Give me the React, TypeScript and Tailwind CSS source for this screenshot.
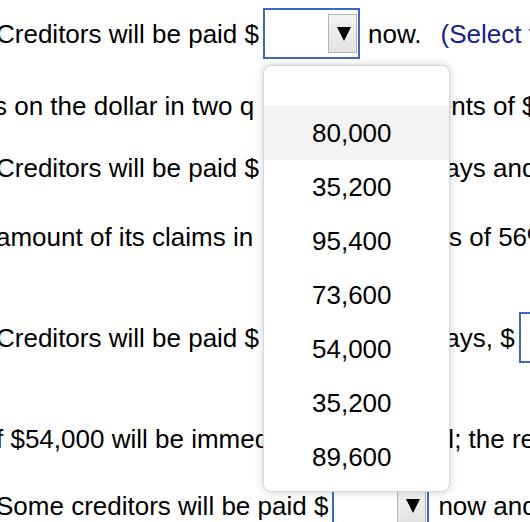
import React from 'react';

const font = { fontFamily: '"Liberation Sans", Arial, Helvetica, sans-serif' };

const SelectBox: React.FC<{ className?: string }> = ({ className }) => (
  <div
    className={`flex h-[51px] w-[97px] shrink-0 items-center justify-end border-2 border-[#3d66c6] bg-white pr-[1px] ${className ?? ''}`}
  >
    <div className="flex h-[39px] w-[29px] items-center justify-center border border-[#b4b4b4] bg-gradient-to-b from-[#f4f4f4] to-[#e2e2e2]">
      <svg width="14" height="14" viewBox="0 0 14 14" className="ml-[2px]">
        <polygon points="0,0 14,0 7,14" fill="#000" />
      </svg>
    </div>
  </div>
);

const options = ['80,000', '35,200', '95,400', '73,600', '54,000', '35,200', '89,600'];

export default function App() {
  return (
    <div className="relative h-[522px] w-[530px] overflow-hidden bg-white text-[26px] leading-[30px] text-black" style={font}>
      <div className="-ml-[4px] flex flex-col whitespace-nowrap pt-[8px]">
        <div className="flex h-[51px] items-center">
          <span>Creditors will be paid $</span>
          <SelectBox className="ml-[4px]" />
          <span className="ml-[8px]">now.</span>
          <span className="ml-[19px] text-[#18208c]">(Select the correct amount.)</span>
        </div>
        <div className="-ml-[2px] mt-[21px] flex h-[51px] items-center">
          <span>s on the dollar in two q</span>
          <span className="ml-[9px] tracking-[-0.5px]">uarterly installm</span>
          <span>ents of $5,000 each.</span>
        </div>
        <div className="mt-[11px] flex h-[51px] items-center">
          <span>Creditors will be paid $</span>
          <SelectBox className="ml-[4px]" />
          <span>&nbsp;in 30 days and</span>
        </div>
        <div className="mt-[18px] flex h-[51px] items-center">
          <span>amount of its claims in</span>
          <span className="ml-[11px] tracking-[-0.35px]">three installment</span>
          <span>s of 56%.</span>
        </div>
        <div className="mt-[50px] flex h-[51px] items-center">
          <span>Creditors will be paid $</span>
          <SelectBox className="ml-[4px]" />
          <span>&nbsp;in 60 days, $</span>
          <SelectBox className="ml-[4px]" />
        </div>
        <div className="mt-[50px] flex h-[51px] items-center">
          <span>f $54,000 will be immediately paid in full; the remaining</span>
        </div>
        <div className="mt-[16px] flex h-[51px] items-center">
          <span>Some creditors will be paid $</span>
          <SelectBox className="ml-[4px]" />
          <span className="ml-[9px]">now and</span>
        </div>
      </div>

      <div className="absolute left-[263px] top-[65px] flex h-[427px] w-[187px] flex-col rounded-[8px] border border-[#d6d6d6] bg-white pb-[8px] shadow-[0_0_10px_rgba(0,0,0,0.18)]">
        <div className="h-[40px] shrink-0" />
        {options.map((o, i) => (
          <div
            key={i}
            className={`flex h-[54px] shrink-0 items-center pl-[48px] ${i === 0 ? 'bg-[#f3f3f3]' : ''}`}
          >
            {o}
          </div>
        ))}
      </div>
    </div>
  );
}
